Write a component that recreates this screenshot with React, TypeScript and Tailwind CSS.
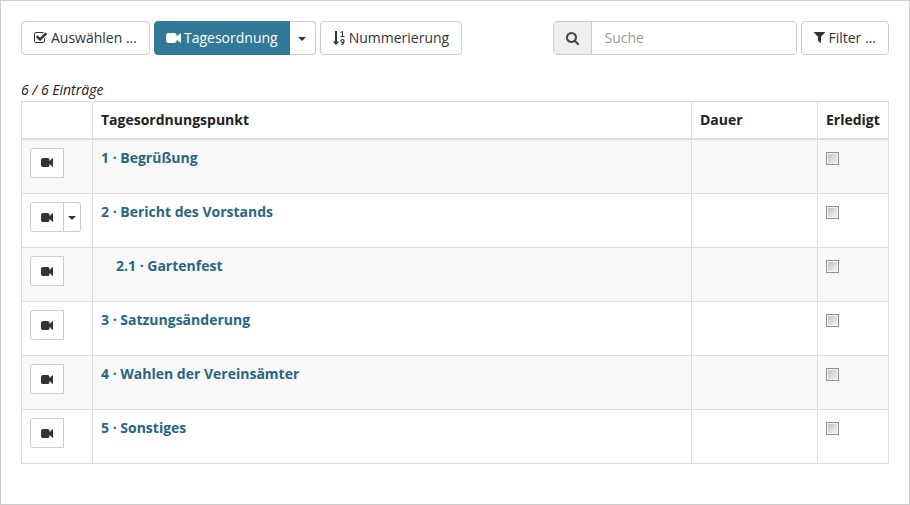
import React from 'react';

type IconProps = { className?: string };

const glyph = 'inline-block h-[14px] shrink-0 fill-current';

function VideoIcon({ className = 'h-[10px] w-[15px]' }: IconProps) {
  return (
    <svg viewBox="0 256 1792 1280" preserveAspectRatio="none" aria-hidden="true" className={`inline-block shrink-0 fill-current ${className}`}>
      <path d="M1792 352v1088q0 42-39 59-13 5-25 5-27 0-45-19l-403-403v166q0 119-84.5 203.5t-203.5 84.5h-704q-119 0-203.5-84.5t-84.5-203.5v-704q0-119 84.5-203.5t203.5-84.5h704q119 0 203.5 84.5t84.5 203.5v165l403-402q18-19 45-19 12 0 25 5 39 17 39 59z" />
    </svg>
  );
}

function CheckSquareIcon() {
  return (
    <svg viewBox="64 0 1664 1792" aria-hidden="true" className={`${glyph} w-[13px]`}>
      <path d="M1472 930v318q0 119-84.5 203.5t-203.5 84.5h-832q-119 0-203.5-84.5t-84.5-203.5v-832q0-119 84.5-203.5t203.5-84.5h832q63 0 117 25 15 7 18 23 3 17-9 29l-49 49q-10 10-23 10-3 0-9-2-23-6-45-6h-832q-66 0-113 47t-47 113v832q0 66 47 113t113 47h832q66 0 113-47t47-113v-254q0-13 9-22l64-64q10-10 23-10 6 0 12 3 20 8 20 29zm231-489l-814 814q-24 24-57 24t-57-24l-430-430q-24-24-24-57t24-57l110-110q24-24 57-24t57 24l263 263 647-647q24-24 57-24t57 24l110 110q24 24 24 57t-24 57z" />
    </svg>
  );
}

function SearchIcon() {
  return (
    <svg viewBox="64 128 1664 1664" aria-hidden="true" className="h-[13px] w-[13px] shrink-0 fill-current">
      <path d="M1216 832q0-185-131.5-316.5t-316.5-131.5-316.5 131.5-131.5 316.5 131.5 316.5 316.5 131.5 316.5-131.5 131.5-316.5zm512 832q0 52-38 90t-90 38q-54 0-90-38l-343-342q-179 124-399 124-143 0-273.5-55.5t-225-150-150-225-55.5-273.5 55.5-273.5 150-225 225-150 273.5-55.5 273.5 55.5 225 150 150 225 55.5 273.5q0 220-124 399l343 343q37 37 37 90z" />
    </svg>
  );
}

function FilterIcon() {
  return (
    <svg viewBox="192 128 1408 1792" aria-hidden="true" className={`${glyph} w-[11px]`}>
      <path d="M1595 295q17 41-14 70l-493 493v742q0 42-39 59-13 5-25 5-27 0-45-19l-256-256q-19-19-19-45v-486l-493-493q-31-29-14-70 17-39 59-39h1280q42 0 59 39z" />
    </svg>
  );
}

function SortNumericIcon() {
  return (
    <svg viewBox="0 0 12 14" aria-hidden="true" className={`${glyph} w-[12px]`}>
      <path d="M2 0h2v10.500h1.600q.4 0 .2.4L3.300 13.800q-.3.3-.6 0L.2 10.900q-.2-.4.2-.4H2z" />
      <path d="M7.500 1.500 9.500.5V5M7.500 5.500h4" fill="none" stroke="currentColor" strokeWidth="1" />
      <path d="M11 10a1.500 1.500 0 1 0-3 0a1.500 1.500 0 1 0 3 0c0 2.200-1 3.500-3 3.300" fill="none" stroke="currentColor" strokeWidth="1.100" />
    </svg>
  );
}

function Caret() {
  return (
    <svg viewBox="0 0 8 4" aria-hidden="true" className="mt-px h-[4px] w-[8px] shrink-0 fill-current">
      <path d="M0 0h8L4 4z" />
    </svg>
  );
}

const button =
  'inline-flex h-[34px] shrink-0 items-center gap-1 whitespace-nowrap rounded border border-[#ccc] bg-white px-3 text-[#333] hover:bg-[#e6e6e6]';

const items = [
  { title: '1 · Begrüßung' },
  { title: '2 · Bericht des Vorstands', menu: true },
  { title: '2.1 · Gartenfest', nested: true },
  { title: '3 · Satzungsänderung' },
  { title: '4 · Wahlen der Vereinsämter' },
  { title: '5 · Sonstiges' },
];

export default function App() {
  return (
    <main className="min-h-screen border border-[#ccc] bg-white p-5 font-['Open_Sans',sans-serif] text-[14px] leading-5 text-[#212121]">
      <div className="flex flex-wrap items-center justify-between gap-1">
        <div className="flex gap-1">
          <button type="button" className={button}>
            <CheckSquareIcon />
            Auswählen ...
          </button>
          <div className="flex">
            <button
              type="button"
              className="inline-flex h-[34px] items-center gap-[3px] whitespace-nowrap rounded-l border border-[#2e7594] bg-[#327897] px-[11px] text-white hover:bg-[#286079]"
            >
              <VideoIcon />
              Tagesordnung
            </button>
            <button
              type="button"
              aria-label="Tagesordnung: weitere Aktionen"
              className="flex h-[34px] w-[26px] items-center justify-center rounded-r border border-l-0 border-[#ccc] bg-white text-[#333]"
            >
              <Caret />
            </button>
          </div>
          <button type="button" className={button}>
            <SortNumericIcon />
            Nummerierung
          </button>
        </div>
        <div className="flex gap-1">
          <div className="flex h-[34px] w-[244px] rounded border border-[#ccc]">
            <label
              htmlFor="suche"
              aria-label="Suche"
              className="flex w-[38px] shrink-0 items-center justify-center rounded-l-[3px] border-r border-[#ccc] bg-[#eee] text-[#444]"
            >
              <SearchIcon />
            </label>
            <input
              id="suche"
              type="text"
              placeholder="Suche"
              className="min-w-0 flex-1 rounded-r-[3px] bg-white px-3 text-[#555] placeholder:text-[#999]"
            />
          </div>
          <button type="button" className="inline-flex h-[34px] shrink-0 items-center gap-[3px] whitespace-nowrap rounded border border-[#ccc] bg-white px-3 text-[#333] hover:bg-[#e6e6e6]">
            <FilterIcon />
            Filter ...
          </button>
        </div>
      </div>

      <p className="mt-[25px] italic">6 / 6 Einträge</p>

      <table className="mt-px w-full table-fixed border-collapse border border-[#ddd]">
        <colgroup>
          <col className="w-[71px]" />
          <col />
          <col className="w-[126px]" />
          <col className="w-[71px]" />
        </colgroup>
        <thead>
          <tr className="h-[37px] border-b-2 border-[#ddd] text-left">
            <td className="border-r border-[#ddd]" />
            <th className="border-r border-[#ddd] px-2 font-bold">Tagesordnungspunkt</th>
            <th className="border-r border-[#ddd] px-2 font-bold">Dauer</th>
            <th className="px-2 font-bold">Erledigt</th>
          </tr>
        </thead>
        <tbody>
          {items.map((item) => (
            <tr key={item.title} className="h-[54px] align-top first:h-[55px] odd:bg-[#f9f9f9]">
              <td className="border border-[#ddd] p-2">
                <div className="flex">
                  <button
                    type="button"
                    aria-label={`${item.title} anzeigen`}
                    className="flex h-[30px] w-[34px] shrink-0 items-center justify-center rounded-l-[3px] border border-[#ccc] bg-white text-[#333]"
                  >
                    <VideoIcon className="h-[9px] w-[12px]" />
                  </button>
                  {item.menu && (
                    <button
                      type="button"
                      aria-label={`${item.title}: weitere Aktionen`}
                      className="flex h-[30px] w-[17px] shrink-0 items-center justify-center rounded-r-[3px] border border-l-0 border-[#ccc] bg-white text-[#333]"
                    >
                      <Caret />
                    </button>
                  )}
                </div>
              </td>
              <td className={item.nested ? 'border border-[#ddd] py-2 pr-2 pl-[23px]' : 'border border-[#ddd] p-2'}>
                <a href="#" className="font-bold text-[#286580] hover:underline">
                  {item.title}
                </a>
              </td>
              <td className="border border-[#ddd] p-2" />
              <td className="border border-[#ddd] p-2">
                <input
                  type="checkbox"
                  aria-label={`${item.title} erledigt`}
                  className="mt-1 block h-[13px] w-[13px] appearance-none border border-[#8e8f8f] bg-linear-to-br from-[#b9c0c9] to-[#f6f6f6] bg-clip-content p-px shadow-[inset_0_0_0_1px_#f4f4f4] checked:from-[#327897] checked:to-[#327897]"
                />
              </td>
            </tr>
          ))}
        </tbody>
      </table>
    </main>
  );
}
